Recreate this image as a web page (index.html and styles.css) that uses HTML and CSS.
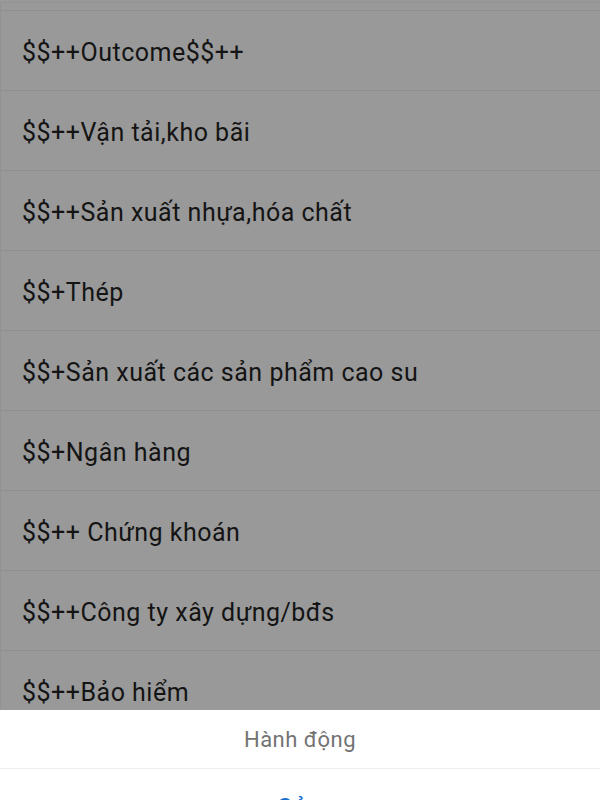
FILE: index.html
```
<!doctype html>
<html>

<head>
    <meta charset="utf-8" />
    <meta name="viewport" content="width=device-width, user-scalable=no" />
    <title>Danh mục</title>
    <link rel="stylesheet" href="styles.css">
</head>

<body>

	<div id="listpage">
		<div class="row row-top"></div>
		<div class="row">$$++Outcome$$++</div>
		<div class="row">$$++Vận tải,kho bãi</div>
		<div class="row">$$++Sản xuất nhựa,hóa chất</div>
		<div class="row">$$+Thép</div>
		<div class="row">$$+Sản xuất các sản phẩm cao su</div>
		<div class="row">$$+Ngân hàng</div>
		<div class="row">$$++ Chứng khoán</div>
		<div class="row">$$++Công ty xây dựng/bđs</div>
		<div class="row">$$++Bảo hiểm</div>
	</div>

	<!-- action sheet over the dimmed list -->
	<div class="sheet">
		<div class="sheet-title">Hành động</div>
		<div class="sheet-item">Sửa</div>
	</div>

</body>

</html>
```

FILE: styles.css
```
* {
	margin: 0px;
	padding: 0px;
	box-sizing: border-box;
}

body {
	font-family: Roboto, "Noto Sans", "Liberation Sans", sans-serif;
	background-color: #999999;
	width: 600px;
	height: 800px;
	overflow: hidden;
}

/* dimmed list start */
#listpage {
	background-color: #999999;
	border-left: 1px solid #929292;
}

.row {
	height: 80px;
	padding: 4px 0 0 21px;
	line-height: 75px;
	font-size: 25px;
	letter-spacing: 0.5px;
	color: #141414;
	border-bottom: 1px solid #8f8f8f;
	white-space: nowrap;
}

.row-top {
	padding: 0;
	border-top: 1px solid #939393;
	margin-top: 2px;
	height: 9px;
}
/* dimmed list end */

/* action sheet start */
.sheet {
	position: fixed;
	left: 0;
	right: 0;
	top: 710px;
	background-color: #ffffff;
}

.sheet-title {
	height: 59px;
	padding-top: 1px;
	line-height: 57px;
	text-align: center;
	font-size: 22px;
	letter-spacing: 0.5px;
	color: #737373;
	border-bottom: 1px solid #eeeeee;
}

.sheet-item {
	height: 72px;
	padding-top: 11px;
	line-height: 58px;
	text-align: center;
	font-size: 25px;
	letter-spacing: 0.5px;
	color: #1a6fcc;
}
/* action sheet end */
```
